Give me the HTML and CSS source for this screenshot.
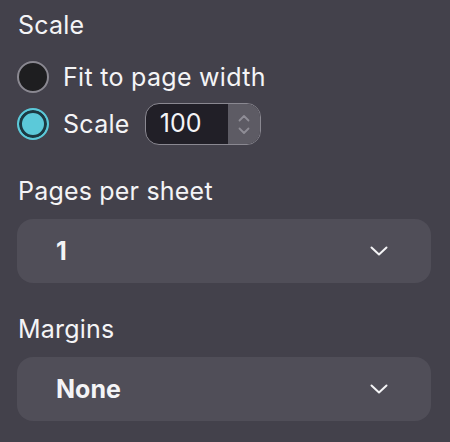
FILE: index.html
```html
<!DOCTYPE html>
<html lang="en">
<head>
<meta charset="UTF-8">
<meta name="viewport" content="width=device-width, initial-scale=1.0">
<title>Print Settings</title>
<link rel="stylesheet" href="styles.css">
</head>
<body>
<div class="panel">
    <div class="section scale-section">
        <h2 class="section-title">Scale</h2>
        <div class="radio-group">
            <label class="radio-row">
                <span class="radio"></span>
                <span class="radio-label">Fit to page width</span>
            </label>
            <label class="radio-row">
                <span class="radio checked"></span>
                <span class="radio-label">Scale</span>
                <span class="spinbox">
                    <span class="spin-value">100</span>
                    <span class="spin-buttons">
                        <svg width="12" height="8" viewBox="0 0 12 8"><path d="M1.5 6.5 L6 2 L10.5 6.5" fill="none" stroke="#8f8d96" stroke-width="1.8" stroke-linecap="round" stroke-linejoin="round"/></svg>
                        <svg width="12" height="8" viewBox="0 0 12 8"><path d="M1.5 1.5 L6 6 L10.5 1.5" fill="none" stroke="#8f8d96" stroke-width="1.8" stroke-linecap="round" stroke-linejoin="round"/></svg>
                    </span>
                </span>
            </label>
        </div>
    </div>
    <div class="section">
        <h2 class="section-title">Pages per sheet</h2>
        <div class="select">
            <span class="select-value">1</span>
            <svg class="chevron" width="18" height="10" viewBox="0 0 18 10"><path d="M1.5 1.5 L9 8.5 L16.5 1.5" fill="none" stroke="#f4f4f6" stroke-width="2" stroke-linecap="round" stroke-linejoin="round"/></svg>
        </div>
    </div>
    <div class="section">
        <h2 class="section-title">Margins</h2>
        <div class="select">
            <span class="select-value">None</span>
            <svg class="chevron" width="18" height="10" viewBox="0 0 18 10"><path d="M1.5 1.5 L9 8.5 L16.5 1.5" fill="none" stroke="#f4f4f6" stroke-width="2" stroke-linecap="round" stroke-linejoin="round"/></svg>
        </div>
    </div>
</div>
</body>
</html>
```

FILE: styles.css
```css
html, body {
    margin: 0;
    padding: 0;
}
body {
    background-color: #43414b;
    color: #f4f4f6;
    font-family: Inter, "Noto Sans", sans-serif;
    width: 450px;
    height: 442px;
    overflow: hidden;
}
.panel {
    padding: 10px 19px 0 17px;
    display: flex;
    flex-direction: column;
}
.section {
    display: flex;
    flex-direction: column;
    margin-top: 31px;
}
.scale-section {
    margin-top: 0;
}
.section-title {
    margin: 0 0 0 1px;
    font-size: 25px;
    font-weight: 400;
    line-height: 30px;
    letter-spacing: 0.2px;
}
.radio-group {
    display: flex;
    flex-direction: column;
    gap: 5px;
    margin-top: 16px;
}
.radio-row {
    display: flex;
    align-items: center;
    height: 42px;
}
.radio {
    box-sizing: border-box;
    width: 32px;
    height: 32px;
    border-radius: 50%;
    border: 2px solid #8a8891;
    background: #1e1e20;
    flex-shrink: 0;
}
.radio.checked {
    border-color: #5bc9d9;
    background: #5bc9d9;
    box-shadow: inset 0 0 0 3px #1c3942;
}
.radio-label {
    font-size: 25px;
    letter-spacing: 0.3px;
    margin-left: 14px;
}
.spinbox {
    box-sizing: border-box;
    display: flex;
    height: 42px;
    width: 116px;
    margin-left: 15px;
    border: 1.5px solid #8a8891;
    border-radius: 14px;
    background: #211f27;
    overflow: hidden;
}
.spin-value {
    flex: 1;
    font-size: 25px;
    line-height: 39px;
    padding-left: 14px;
}
.spin-buttons {
    width: 32px;
    background: #5d5b64;
    display: flex;
    flex-direction: column;
    align-items: center;
    justify-content: center;
    gap: 5px;
}
.select {
    display: flex;
    align-items: center;
    justify-content: space-between;
    height: 64px;
    margin-top: 13px;
    padding: 0 43px 0 39px;
    background: #504e58;
    border-radius: 16px;
}
.select-value {
    font-size: 25px;
    font-weight: 700;
}
.chevron {
    display: block;
}
```
